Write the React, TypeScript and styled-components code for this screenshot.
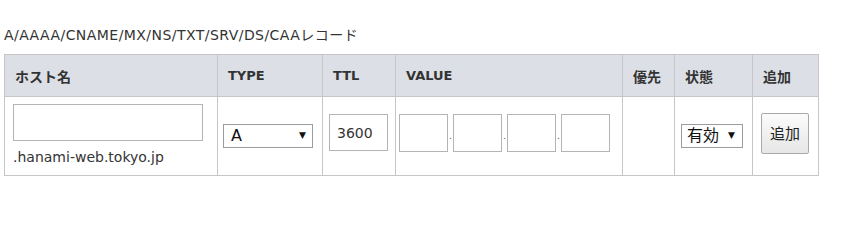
import React from "react";
import styled, { createGlobalStyle } from "styled-components";

const FONT = `"DejaVu Sans", "Noto Sans CJK JP", sans-serif`;

const Global = createGlobalStyle`
  html, body { margin: 0; padding: 0; background: #fff; }
  body { font-family: ${FONT}; color: #333; }
  * { box-sizing: border-box; }
`;

const Page = styled.div`
  padding: 25px 4px 0 4px;
`;

const Title = styled.div`
  font-size: 14px;
  line-height: 20px;
  letter-spacing: 0.45px;
  color: #333;
  margin-bottom: 9px;
`;

const Grid = styled.div`
  display: grid;
  grid-template-columns: 213px 105px 73px 227px 52px 78px 66px;
  width: 815px;
  border-top: 1px solid #c6c6c6;
  border-left: 1px solid #c6c6c6;
`;

const HeadCell = styled.div<{ $cjk?: boolean }>`
  height: 42px;
  display: flex;
  align-items: center;
  padding-left: 10px;
  background: #dce0e6;
  border-right: 1px solid #c6c6c6;
  border-bottom: 1px solid #c6c6c6;
  font-weight: bold;
  font-size: ${(p) => (p.$cjk ? "14px" : "13px")};
  color: #333;
  white-space: nowrap;
`;

const BodyCell = styled.div<{ $top: number; $left: number }>`
  height: 79px;
  padding-top: ${(p) => p.$top}px;
  padding-left: ${(p) => p.$left}px;
  border-right: 1px solid #c6c6c6;
  border-bottom: 1px solid #c6c6c6;
  background: #fff;
`;

const TextInput = styled.input<{ $w: number; $h: number }>`
  display: block;
  width: ${(p) => p.$w}px;
  height: ${(p) => p.$h}px;
  margin: 0;
  padding: 0 7px;
  border: 1px solid #b4b4b4;
  border-radius: 0;
  background: #fff;
  font-family: ${FONT};
  font-size: 14px;
  color: #333;
  outline: none;
`;

const Domain = styled.div`
  margin-top: 7px;
  font-size: 14px;
  line-height: 18px;
  color: #333;
  white-space: nowrap;
`;

const SelectWrap = styled.span<{ $w: number }>`
  position: relative;
  display: block;
  width: ${(p) => p.$w}px;
  height: 24px;
`;

const NativeSelect = styled.select<{ $padL: number }>`
  appearance: none;
  -webkit-appearance: none;
  display: block;
  width: 100%;
  height: 100%;
  margin: 0;
  padding: 0 0 0 ${(p) => p.$padL}px;
  border: 1px solid #9c9c9c;
  border-radius: 0;
  background: #fff;
  font-family: ${FONT};
  font-size: 16px;
  line-height: 22px;
  color: #111;
  outline: none;
`;

const Arrow = styled.span<{ $right: number }>`
  position: absolute;
  right: ${(p) => p.$right}px;
  top: 50%;
  transform: translateY(-52%);
  font-size: 9px;
  line-height: 9px;
  color: #111;
  pointer-events: none;
`;

const OctetRow = styled.div`
  display: flex;
  align-items: center;
`;

const Dot = styled.span`
  width: 5px;
  padding-left: 1px;
  font-size: 9px;
  line-height: 9px;
  color: #555;
  transform: translateY(3px);
`;

const AddButton = styled.button`
  display: block;
  width: 48px;
  height: 41px;
  margin: 0;
  padding: 0;
  border: 1px solid #a9a9a9;
  border-radius: 2px;
  background: linear-gradient(#fbfbfb, #e6e6e6);
  font-family: ${FONT};
  font-size: 15px;
  color: #222;
  padding-bottom: 3px;
`;

const headers: { label: string; cjk?: boolean }[] = [
  { label: "ホスト名", cjk: true },
  { label: "TYPE" },
  { label: "TTL" },
  { label: "VALUE" },
  { label: "優先", cjk: true },
  { label: "状態", cjk: true },
  { label: "追加", cjk: true },
];

export default function App() {
  return (
    <Page>
      <Global />
      <Title>A/AAAA/CNAME/MX/NS/TXT/SRV/DS/CAAレコード</Title>
      <Grid>
        {headers.map((h) => (
          <HeadCell key={h.label} $cjk={h.cjk}>
            {h.label}
          </HeadCell>
        ))}

        <BodyCell $top={7} $left={8}>
          <TextInput $w={190} $h={37} defaultValue="" />
          <Domain>.hanami-web.tokyo.jp</Domain>
        </BodyCell>

        <BodyCell $top={27} $left={5}>
          <SelectWrap $w={90}>
            <NativeSelect $padL={7} defaultValue="A">
              <option value="A">A</option>
              <option value="AAAA">AAAA</option>
              <option value="CNAME">CNAME</option>
              <option value="MX">MX</option>
            </NativeSelect>
            <Arrow $right={7}>▼</Arrow>
          </SelectWrap>
        </BodyCell>

        <BodyCell $top={17} $left={6}>
          <TextInput $w={59} $h={37} defaultValue="3600" />
        </BodyCell>

        <BodyCell $top={17} $left={3}>
          <OctetRow>
            <TextInput $w={49} $h={38} />
            <Dot>.</Dot>
            <TextInput $w={49} $h={38} />
            <Dot>.</Dot>
            <TextInput $w={49} $h={38} />
            <Dot>.</Dot>
            <TextInput $w={49} $h={38} />
          </OctetRow>
        </BodyCell>

        <BodyCell $top={0} $left={0} />

        <BodyCell $top={27} $left={6}>
          <SelectWrap $w={62}>
            <NativeSelect $padL={5} defaultValue="on">
              <option value="on">有効</option>
              <option value="off">無効</option>
            </NativeSelect>
            <Arrow $right={8}>▼</Arrow>
          </SelectWrap>
        </BodyCell>

        <BodyCell $top={16} $left={8}>
          <AddButton type="button">追加</AddButton>
        </BodyCell>
      </Grid>
    </Page>
  );
}
